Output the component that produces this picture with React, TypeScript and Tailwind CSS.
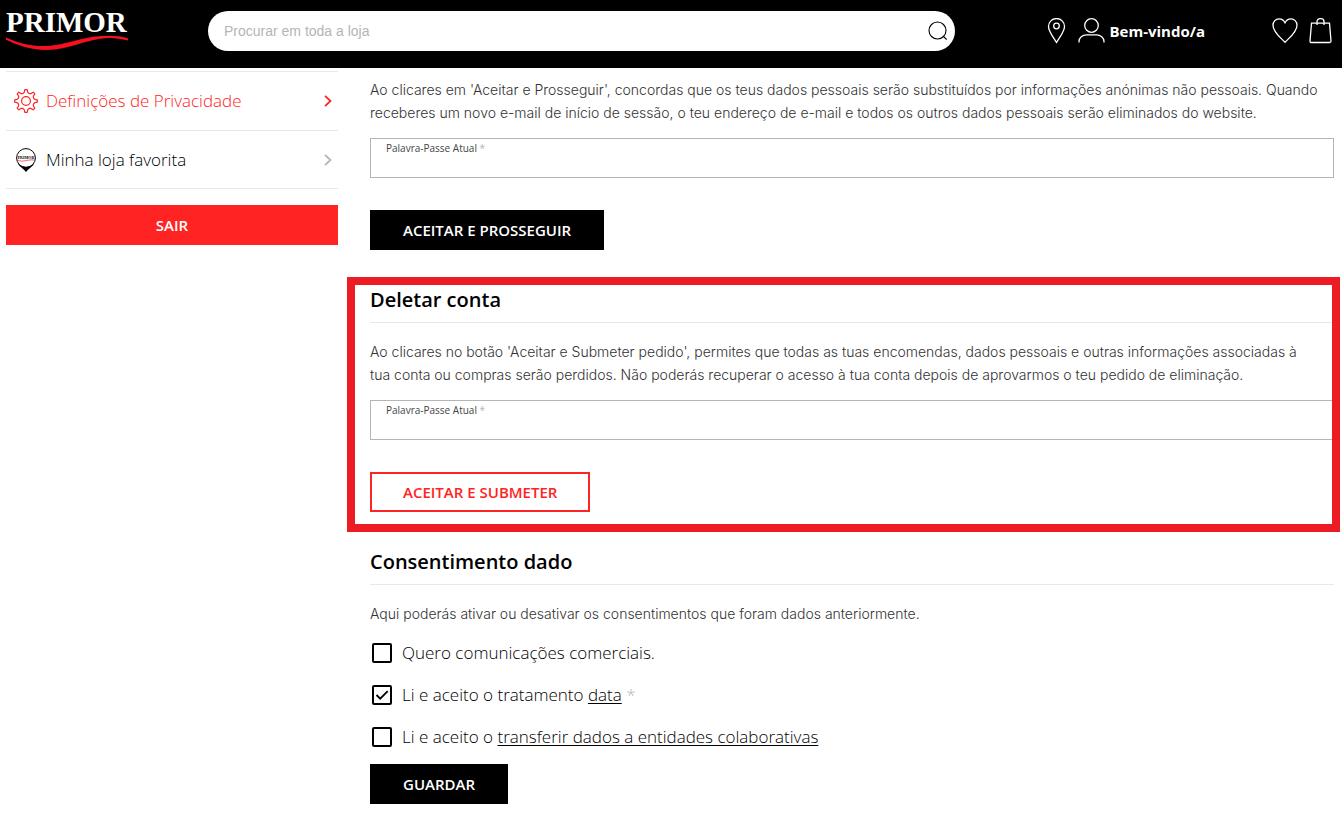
import { useId, type ReactNode } from "react";

function Logo() {
  return (
    <a href="#inicio" aria-label="Primor" className="block w-[202px] shrink-0 pt-2">
      <span className="block font-['Liberation_Serif',serif] text-[29px] font-bold leading-7 text-white">
        PRIMOR
      </span>
      <svg width="123" height="15" viewBox="0 0 123 15" className="block" aria-hidden="true">
        <path
          d="M0 1.500C12 7 25 10.500 41 10C62 9 76 -.2 102 -.2C110 -.2 117 .5 122 2.500V4.500C114 2.700 108 1.800 101 2.100C79 3.500 64 13.800 40 14C24 14 10 8.500 0 3.700Z"
          fill="#f51020"
        />
      </svg>
    </a>
  );
}

function Header() {
  return (
    <header className="flex h-[68px] items-start bg-black pl-1.5 pr-2.5">
      <Logo />
      <form role="search" className="mt-[11px] flex h-10 flex-1 items-center rounded-full bg-white pl-4 pr-[7px]">
        <input
          type="search"
          aria-label="Procurar em toda a loja"
          placeholder="Procurar em toda a loja"
          className="min-w-0 flex-1 bg-transparent font-['Liberation_Sans',sans-serif] text-sm outline-none placeholder:text-[#b5b5b5]"
        />
        <button type="button" aria-label="Procurar">
          <svg width="20" height="20" viewBox="0 0 20 20" fill="none" stroke="#000" strokeWidth="1.1" className="block">
            <circle cx="9.500" cy="9.500" r="8.500" />
            <path d="M15 15L18.700 18.700" />
          </svg>
        </button>
      </form>
      <nav aria-label="Utilizador" className="ml-[92px] mt-[11px] flex h-10 shrink-0 items-center">
        <a href="#lojas" aria-label="Lojas">
          <svg width="19" height="26" viewBox="0 0 19 26" fill="none" stroke="#fff" strokeWidth="1.3" className="block">
            <path d="M9.500 24.500C6 18.500 1.500 13.500 1.500 8.500a8 8 0 0 1 16 0C17.500 13.500 13 18.500 9.500 24.500Z" />
            <circle cx="9.500" cy="8" r="2.800" />
          </svg>
        </a>
        <a href="#conta" className="ml-3 flex items-center gap-1 text-[15px] font-bold text-white">
          <svg width="27" height="26" viewBox="0 0 27 26" fill="none" stroke="#fff" strokeWidth="1.3">
            <circle cx="13.500" cy="7.500" r="6.800" />
            <path d="M1 24.500V23.500C1 19.500 4.500 16.800 8.500 16.800H18.500C22.500 16.800 26 19.500 26 23.500V24.500" />
          </svg>
          Bem-vindo/a
        </a>
        <a href="#favoritos" aria-label="Favoritos" className="ml-[67px]">
          <svg width="26" height="26" viewBox="0 0 26 26" fill="none" stroke="#fff" strokeWidth="1.3" className="block">
            <path d="M13 24.200C9 20 1 14.500 1 7.300C1 3.500 3.800 .8 7 .8C9.800 .8 12 2.500 13 4.700C14 2.500 16.200 .8 19 .8C22.200 .8 25 3.500 25 7.300C25 14.500 17 20 13 24.200Z" />
          </svg>
        </a>
        <a href="#cesto" aria-label="Cesto" className="ml-[11px]">
          <svg width="23" height="26" viewBox="0 0 23 26" fill="none" stroke="#fff" strokeWidth="1.300" className="block">
            <path d="M2.500 5.200H20.500L22 23C22 24.100 21.500 24.500 20.500 24.500H2.500C1.500 24.500 1 24.100 1 23Z" />
            <path d="M8 7V3.700A3 3 0 0 1 11 .7H12A3 3 0 0 1 15 3.700V7" />
          </svg>
        </a>
      </nav>
    </header>
  );
}

function Chevron() {
  return (
    <svg width="8" height="12" viewBox="0 0 8 12" fill="none" stroke="currentColor" strokeWidth="1.800" aria-hidden="true">
      <path d="M1 .8L6.500 6L1 11.200" />
    </svg>
  );
}

const TOOTH: [number, number][] = [
  [-2.6, -7.8],
  [-1.7, -8.8],
  [-1.2, -11.3],
  [1.2, -11.3],
  [1.7, -8.8],
  [2.6, -7.8],
];

const GEAR_POINTS = Array.from({ length: 8 }, (_, i) => (i * Math.PI) / 4)
  .flatMap((a) =>
    TOOTH.map(([x, y]) =>
      [12 + x * Math.cos(a) - y * Math.sin(a), 12 + x * Math.sin(a) + y * Math.cos(a)]
        .map((n) => n.toFixed(2))
        .join(","),
    ),
  )
  .join(" ");

function GearIcon() {
  return (
    <svg width="24" height="24" viewBox="0 0 24 24" fill="none" stroke="#ff2323" strokeWidth="1.200" strokeLinejoin="round" aria-hidden="true">
      <polygon points={GEAR_POINTS} />
      <circle cx="12" cy="12" r="4.400" />
    </svg>
  );
}

function StorePinIcon() {
  return (
    <svg width="24" height="24" viewBox="0 0 24 24" fill="none" aria-hidden="true">
      <path d="M12 24C10 21 6 19 3.600 15.500Q12 22.500 20.400 15.500C18 19 14 21 12 24Z" fill="#000" />
      <circle cx="12" cy="10" r="9.400" stroke="#000" />
      <text
        x="12"
        y="10.800"
        textAnchor="middle"
        fontSize="4"
        fontWeight="700"
        fill="#000"
        className="font-['Liberation_Serif',serif]"
      >
        PRIMOR
      </text>
      <path d="M4 12.300C9 14.500 13 11.300 20 12" stroke="#f34" strokeWidth=".8" />
    </svg>
  );
}

function Sidebar() {
  return (
    <aside className="w-[332px] shrink-0 pt-[3px]">
      <ul className="border-t border-[#e8e8e8] text-[17px] font-light">
        <li className="border-b border-[#e8e8e8]">
          <a href="#privacidade" className="flex h-[58px] items-center pl-2 pr-1.5 text-[#ff2323]">
            <GearIcon />
            <span className="ml-2 flex-1">Definições de Privacidade</span>
            <Chevron />
          </a>
        </li>
        <li className="border-b border-[#e8e8e8]">
          <a href="#loja" className="flex h-[57px] items-center pl-2 pr-1.5 text-black">
            <StorePinIcon />
            <span className="ml-2 flex-1">Minha loja favorita</span>
            <span className="text-[#b5b5b5]">
              <Chevron />
            </span>
          </a>
        </li>
      </ul>
      <button type="button" className="mt-4 h-10 w-full bg-[#ff2323] text-[15px] font-semibold text-white">
        SAIR
      </button>
    </aside>
  );
}

function Title({ children }: { children: ReactNode }) {
  return (
    <h2 className="mb-[17px] border-b border-[#e8e8e8] pb-2 text-xl font-semibold leading-[29px]">{children}</h2>
  );
}

function Paragraph({ children }: { children: ReactNode }) {
  return <p className="font-['Inter',sans-serif] text-sm font-light leading-[23px] text-[#333]">{children}</p>;
}

function PasswordField() {
  const id = useId();
  return (
    <div className="mt-3.5 flex h-10 flex-col border border-[#b5b5b5] px-[15px] pt-[3px]">
      <label htmlFor={id} className="text-[10px] leading-3 text-[#444]">
        Palavra-Passe Atual <span className="text-[#b5b5b5]">*</span>
      </label>
      <input id={id} type="password" className="min-h-0 w-full flex-1 bg-transparent text-sm outline-none" />
    </div>
  );
}

function Consent({ checked, label, children }: { checked?: boolean; label: string; children?: ReactNode }) {
  const id = useId();
  return (
    <div className="flex h-[42px] items-center pl-0.5">
      <span className="grid size-5 shrink-0">
        <input
          id={id}
          type="checkbox"
          defaultChecked={checked}
          className="peer col-start-1 row-start-1 size-5 appearance-none rounded-xs border-2 border-black bg-white"
        />
        <svg
          viewBox="0 0 20 20"
          fill="none"
          stroke="#000"
          strokeWidth="1.800"
          className="pointer-events-none invisible col-start-1 row-start-1 size-5 peer-checked:visible"
          aria-hidden="true"
        >
          <path d="M4.500 10L8.200 13.700L15.700 6.200" />
        </svg>
      </span>
      <label htmlFor={id} className="ml-2.5 text-[17px] font-light">
        {label} {children}
      </label>
    </div>
  );
}

export default function App() {
  return (
    <div className="min-h-screen bg-white font-['Open_Sans',sans-serif] text-black">
      <Header />
      <div className="flex gap-8 pl-1.5 pr-2">
        <Sidebar />
        <main className="min-w-0 flex-1 pb-[15px] pt-2.5">
          <section>
            <Paragraph>
              Ao clicares em 'Aceitar e Prosseguir', concordas que os teus dados pessoais serão substituídos por
              informações anónimas não pessoais. Quando <br className="hidden lg:inline" />
              receberes um novo e-mail de início de sessão, o teu endereço de e-mail e todos os outros dados pessoais
              serão eliminados do website.
            </Paragraph>
            <PasswordField />
            <button type="button" className="mt-8 block h-10 bg-black px-[33px] text-[15px] font-semibold text-white">
              ACEITAR E PROSSEGUIR
            </button>
          </section>
          <section className="relative mt-[35px]">
            <Title>Deletar conta</Title>
            <Paragraph>
              Ao clicares no botão 'Aceitar e Submeter pedido', permites que todas as tuas encomendas, dados pessoais e
              outras informações associadas à <br className="hidden lg:inline" />
              tua conta ou compras serão perdidos. Não poderás recuperar o acesso à tua conta depois de aprovarmos o teu
              pedido de eliminação.
            </Paragraph>
            <PasswordField />
            <button
              type="button"
              className="mt-8 block h-10 border-2 border-[#ff2323] px-[31px] text-[15px] font-semibold text-[#ff2323]"
            >
              ACEITAR E SUBMETER
            </button>
            <div className="pointer-events-none absolute -bottom-5 -left-[23px] -right-1.5 -top-2 border-8 border-[#ed1c24]" />
          </section>
          <section className="mt-[35px]">
            <Title>Consentimento dado</Title>
            <Paragraph>
              Aqui poderás ativar ou desativar os consentimentos que foram dados anteriormente.
            </Paragraph>
            <div className="mb-1.5 mt-[7px]">
              <Consent label="Quero comunicações comerciais." />
              <Consent checked label="Li e aceito o tratamento">
                <a href="#data" className="underline underline-offset-2">
                  data
                </a>{" "}
                <span className="text-[#b5b5b5]">*</span>
              </Consent>
              <Consent label="Li e aceito o">
                <a href="#transferir" className="underline underline-offset-2">
                  transferir dados a entidades colaborativas
                </a>
              </Consent>
            </div>
            <button type="button" className="block h-10 bg-black px-[33px] text-[15px] font-semibold text-white">
              GUARDAR
            </button>
          </section>
        </main>
      </div>
    </div>
  );
}
